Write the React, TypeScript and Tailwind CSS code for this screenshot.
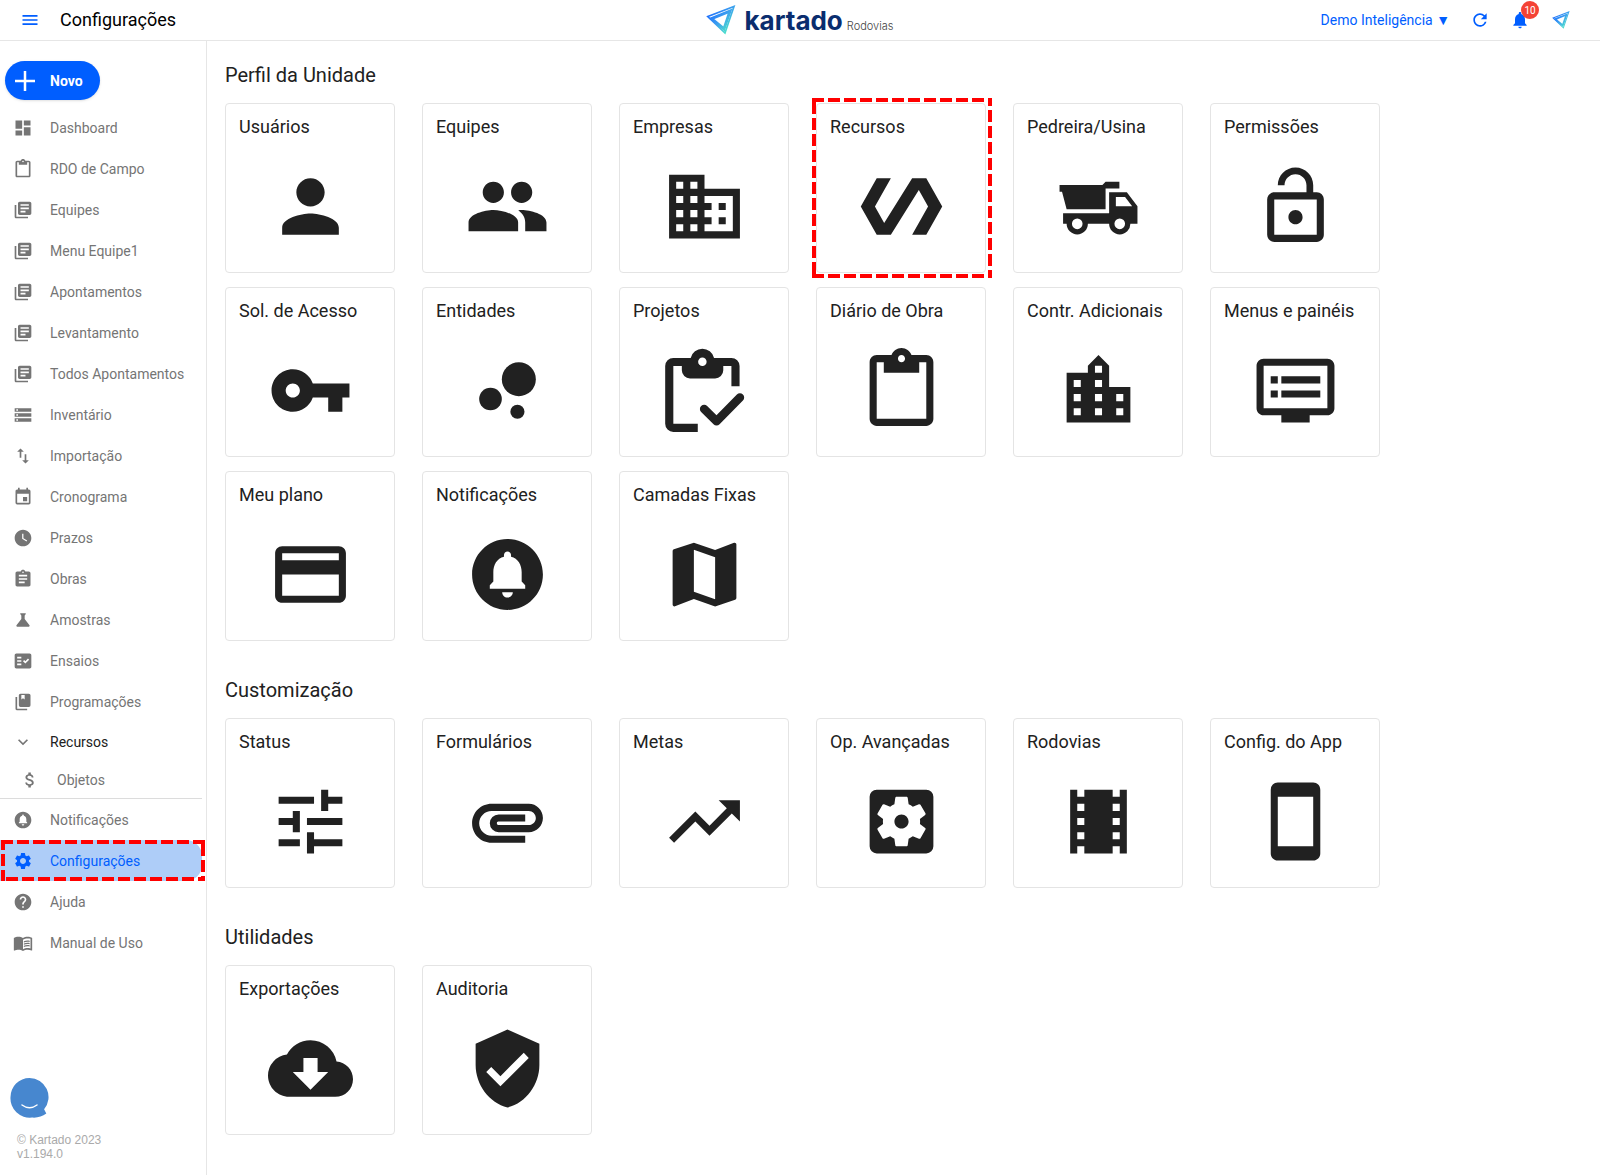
import { ReactNode, useState } from "react";
import {
    MdAssignment, MdAttachMoney, MdAttachment, MdBubbleChart, MdCircleNotifications, MdCloudDownload,
    MdContentPaste, MdDashboard, MdDomain, MdDvr, MdEvent, MdExpandMore, MdFactCheck, MdGroup, MdHelp,
    MdImportExport, MdLibraryBooks, MdLocationCity, MdLockOpen, MdMap, MdMenu, MdMenuBook, MdNotifications,
    MdPayment, MdPerson, MdPolymer, MdRefresh, MdScience, MdSettings, MdSettingsApplications,
    MdStayPrimaryPortrait, MdStorage, MdTheaters, MdTrendingUp, MdTune, MdVerifiedUser, MdVpnKey, MdWatchLater,
} from "react-icons/md";

type IconProps = { size?: number };
type Item = { id: string; name: string; icon: (props: IconProps) => ReactNode };

const DumpTruck = ({ size = 24 }: IconProps) => (
    <svg width={size} height={size} viewBox="0 0 24 24" fill="currentColor">
        <path d="M1 5.9h12.1L14 5h3.900v1.900H14v5.900H3L1.700 7.800H1z" />
        <path fillRule="evenodd" d="M2 13.9h13V8h5l3 3.900v5h-2a3 3 0 0 1-6 0H9a3 3 0 0 1-6 0H2zM16.900 9.300v2.600h4.600l-2-2.600zM6 15.400a1.500 1.500 0 1 0 0 3 1.500 1.500 0 0 0 0-3zm12 0a1.500 1.500 0 1 0 0 3 1.500 1.500 0 0 0 0-3z" />
    </svg>
);

const ClipboardCheck = ({ size = 24 }: IconProps) => (
    <svg width={size} height={size} viewBox="0 0 24 24" fill="currentColor">
        <path fillRule="evenodd" d="M10.3 22.9V25.2H3.4a2.3 2.3 0 0 1-2.3-2.3V6.600a2.300 2.300 0 0 1 2.300-2.300h4.900a3.400 3.400 0 0 1 6.600 0h4.900a2.300 2.300 0 0 1 2.300 2.300v5.700h-2.300V6.600h-2.300v1.200a2.300 2.300 0 0 1-2.300 2.300H8.100a2.300 2.300 0 0 1-2.300-2.300V6.600H3.400v16.300zM11.600 4.200a1.200 1.200 0 1 0 0 2.400 1.200 1.200 0 0 0 0-2.400z" transform="translate(-.2 -1.5)" />
        <path d="M11.9 17.2l3.500 3.500 6.600-6.700" fill="none" stroke="currentColor" strokeWidth="2.4" strokeLinecap="round" strokeLinejoin="round" />
    </svg>
);

const BookMultiple = ({ size = 24 }: IconProps) => (
    <svg width={size} height={size} viewBox="0 0 24 24" fill="currentColor">
        <path fillRule="evenodd" d="M19 18H9a2 2 0 0 1-2-2V4a2 2 0 0 1 2-2h10a2 2 0 0 1 2 2v12a2 2 0 0 1-2 2M17 20v2H5a2 2 0 0 1-2-2V6h2v14zM10 3.500v5.500l2-1.500 2 1.500V3.500z" />
    </svg>
);

const KartadoMark = ({ size = 30 }: IconProps) => (
    <svg width={size} height={size} viewBox="0 0 30 30" fill="none" strokeLinejoin="miter">
        <defs>
            <linearGradient id={`mark-${size}`} x1="0" y1="8" x2="22" y2="28" gradientUnits="userSpaceOnUse">
                <stop offset="0" stopColor="#1565ff" />
                <stop offset="0.5" stopColor="#3a9cf0" />
                <stop offset="1" stopColor="#4fe8c6" />
            </linearGradient>
        </defs>
        <g stroke={`url(#mark-${size})`}>
            <path strokeWidth="3" d="M5.500 13.600 24 6.200 18 24z" />
            <path strokeWidth="1.700" d="M1.800 11.500 28 1.500 19 28z" />
        </g>
    </svg>
);

const menu: Item[] = [
    { id: "dashboard", name: "Dashboard", icon: MdDashboard },
    { id: "rdo", name: "RDO de Campo", icon: MdContentPaste },
    { id: "equipes", name: "Equipes", icon: MdLibraryBooks },
    { id: "menu-equipe", name: "Menu Equipe1", icon: MdLibraryBooks },
    { id: "apontamentos", name: "Apontamentos", icon: MdLibraryBooks },
    { id: "levantamento", name: "Levantamento", icon: MdLibraryBooks },
    { id: "todos", name: "Todos Apontamentos", icon: MdLibraryBooks },
    { id: "inventario", name: "Inventário", icon: MdStorage },
    { id: "importacao", name: "Importação", icon: MdImportExport },
    { id: "cronograma", name: "Cronograma", icon: MdEvent },
    { id: "prazos", name: "Prazos", icon: MdWatchLater },
    { id: "obras", name: "Obras", icon: MdAssignment },
    { id: "amostras", name: "Amostras", icon: MdScience },
    { id: "ensaios", name: "Ensaios", icon: MdFactCheck },
    { id: "programacoes", name: "Programações", icon: BookMultiple },
];

const bottomMenu: Item[] = [
    { id: "notificacoes", name: "Notificações", icon: MdCircleNotifications },
    { id: "configuracoes", name: "Configurações", icon: MdSettings },
    { id: "ajuda", name: "Ajuda", icon: MdHelp },
    { id: "manual", name: "Manual de Uso", icon: MdMenuBook },
];

const sections: { title: string; cards: Item[] }[] = [
    {
        title: "Perfil da Unidade",
        cards: [
            { id: "usuarios", name: "Usuários", icon: MdPerson },
            { id: "equipes", name: "Equipes", icon: MdGroup },
            { id: "empresas", name: "Empresas", icon: MdDomain },
            { id: "recursos", name: "Recursos", icon: MdPolymer },
            { id: "pedreira", name: "Pedreira/Usina", icon: DumpTruck },
            { id: "permissoes", name: "Permissões", icon: MdLockOpen },
            { id: "acesso", name: "Sol. de Acesso", icon: MdVpnKey },
            { id: "entidades", name: "Entidades", icon: MdBubbleChart },
            { id: "projetos", name: "Projetos", icon: ClipboardCheck },
            { id: "diario", name: "Diário de Obra", icon: MdContentPaste },
            { id: "controles", name: "Contr. Adicionais", icon: MdLocationCity },
            { id: "menus", name: "Menus e painéis", icon: MdDvr },
            { id: "plano", name: "Meu plano", icon: MdPayment },
            { id: "notificacoes", name: "Notificações", icon: MdCircleNotifications },
            { id: "camadas", name: "Camadas Fixas", icon: MdMap },
        ],
    },
    {
        title: "Customização",
        cards: [
            { id: "status", name: "Status", icon: MdTune },
            { id: "formularios", name: "Formulários", icon: MdAttachment },
            { id: "metas", name: "Metas", icon: MdTrendingUp },
            { id: "avancadas", name: "Op. Avançadas", icon: MdSettingsApplications },
            { id: "rodovias", name: "Rodovias", icon: MdTheaters },
            { id: "app", name: "Config. do App", icon: MdStayPrimaryPortrait },
        ],
    },
    {
        title: "Utilidades",
        cards: [
            { id: "exportacoes", name: "Exportações", icon: MdCloudDownload },
            { id: "auditoria", name: "Auditoria", icon: MdVerifiedUser },
        ],
    },
];

// red dashed frame laid over a highlighted element
const Frame = ({ className }: { className: string }) => (
    <svg className={`pointer-events-none absolute z-10 overflow-hidden ${className}`} aria-hidden="true">
        <rect width="100%" height="100%" fill="none" stroke="#ff0000" strokeWidth="8" strokeDasharray="12 4" />
    </svg>
);

const MenuLink = ({ item, active }: { item: Item; active?: boolean }) => (
    <li className="relative">
        <a href={`#${item.id}`}
            className={active
                ? "mr-1 flex h-[41px] items-center gap-[17px] rounded-r-2xl bg-[#aecdf8] pl-[13px] text-[#005eff]"
                : "mr-1 flex h-[41px] items-center gap-[17px] pl-[13px] text-[#757575]"}>
            <item.icon size={20} />
            <span>{item.name}</span>
        </a>
        {active && <Frame className="left-px top-0 h-full w-[204px]" />}
    </li>
);

const Header = () => (
    <header className="grid h-[41px] grid-cols-[1fr_auto_1fr] items-center border-b border-[#e6e6e6]">
        <div className="flex items-center gap-5 pl-5">
            <button type="button" aria-label="Menu" className="text-[#005eff]"><MdMenu size={20} /></button>
            <h1 className="text-lg text-black">Configurações</h1>
        </div>
        <a href="#inicio" className="flex items-center gap-2">
            <KartadoMark size={30} />
            <span className="flex items-baseline gap-1">
                <span className="font-['Inter',sans-serif] text-[26px] font-bold text-[#0a2d6e]">kartado</span>
                <span className="font-['Inter',sans-serif] text-[11px] font-light text-[#444]">Rodovias</span>
            </span>
        </a>
        <div className="flex items-center justify-end pr-[30px] text-[#005eff]">
            <button type="button" className="mr-5 text-sm">Demo Inteligência ▼</button>
            <button type="button" aria-label="Atualizar" className="mr-5"><MdRefresh size={20} /></button>
            <button type="button" aria-label="Notificações" className="relative mr-[22px]">
                <MdNotifications size={20} />
                <span className="absolute -right-[9px] -top-[9px] flex size-[18px] items-center justify-center rounded-full bg-[#f44336] text-[10px] text-white">10</span>
            </button>
            <KartadoMark size={18} />
        </div>
    </header>
);

const SideBar = () => {
    const [open, setOpen] = useState(true);

    return (
        <aside className="flex w-[207px] shrink-0 flex-col border-r border-[#e6e6e6] text-sm">
            <button type="button"
                className="ml-[5px] mt-5 mb-[7px] flex h-[39px] w-[95px] items-center gap-[15px] rounded-full bg-[#005eff] pl-[10px] font-bold text-white shadow">
                <svg width="20" height="20" viewBox="0 0 20 20" stroke="currentColor" strokeWidth="2.5">
                    <path d="M10 0v20M0 10h20" />
                </svg>
                Novo
            </button>
            <nav>
                <ul>
                    {menu.map((item) => <MenuLink key={item.id} item={item} />)}
                    <li>
                        <button type="button" onClick={() => setOpen(!open)}
                            className="flex h-10 items-center gap-[17px] pl-[13px] text-[#212121]">
                            <MdExpandMore size={20} className="text-[#757575]" />
                            Recursos
                        </button>
                        {open && (
                            <a href="#objetos" className="flex h-9 items-center gap-[17px] pl-5 text-[#757575]">
                                <MdAttachMoney size={20} />
                                Objetos
                            </a>
                        )}
                    </li>
                </ul>
                <hr className="mr-1 border-[#dcdcdc]" />
                <ul>
                    {bottomMenu.map((item) => (
                        <MenuLink key={item.id} item={item} active={item.id === "configuracoes"} />
                    ))}
                </ul>
            </nav>
            <div className="mt-auto pb-[14px] pl-[17px] pt-8">
                <button type="button" aria-label="Chat" className="-ml-[7px] mb-[15px] block">
                    <svg width="40" height="40" viewBox="0 0 40 40">
                        <path fill="#4787cf" d="M19.500 0a19 19 0 0 1 14.600 31.200l2.200 4.400c-4 3.200-9 4.400-14.300 4A19.300 19.300 0 0 1 .5 19 19 19 0 0 1 19.500 0z" />
                        <path d="M12 27q7.500 5.500 15 0" fill="none" stroke="#fff" strokeWidth="1.5" strokeLinecap="round" />
                    </svg>
                </button>
                <p className="font-['Liberation_Sans',sans-serif] text-xs leading-[14px] text-[#aaa]">
                    © Kartado 2023<br />v1.194.0
                </p>
            </div>
        </aside>
    );
};

const App = () => {
    return (
        <div className="flex min-h-screen flex-col bg-white font-['Roboto',sans-serif] text-[#212121]">
            <Header />
            <div className="flex grow">
                <SideBar />
                <main className="flex max-w-[1240px] grow flex-col gap-[35px] px-[18px] pb-10 pt-5">
                    {sections.map((section) => (
                        <section key={section.title}>
                            <h2 className="mb-[14px] text-xl">{section.title}</h2>
                            <div className="flex flex-wrap gap-x-[27px] gap-y-[14px]">
                                {section.cards.map((card) => (
                                    <a key={card.id} href={`#${card.id}`}
                                        className="relative flex size-[170px] flex-col items-center rounded border border-[#e4e4e4] pt-[11px]">
                                        <span className="w-full px-[13px] text-lg leading-6">{card.name}</span>
                                        <span className="mt-[25px]"><card.icon size={85} /></span>
                                        {card.id === "recursos" && <Frame className="-left-[5px] -top-[6px] size-[180px]" />}
                                    </a>
                                ))}
                            </div>
                        </section>
                    ))}
                </main>
            </div>
        </div>
    );
};

export default App;
